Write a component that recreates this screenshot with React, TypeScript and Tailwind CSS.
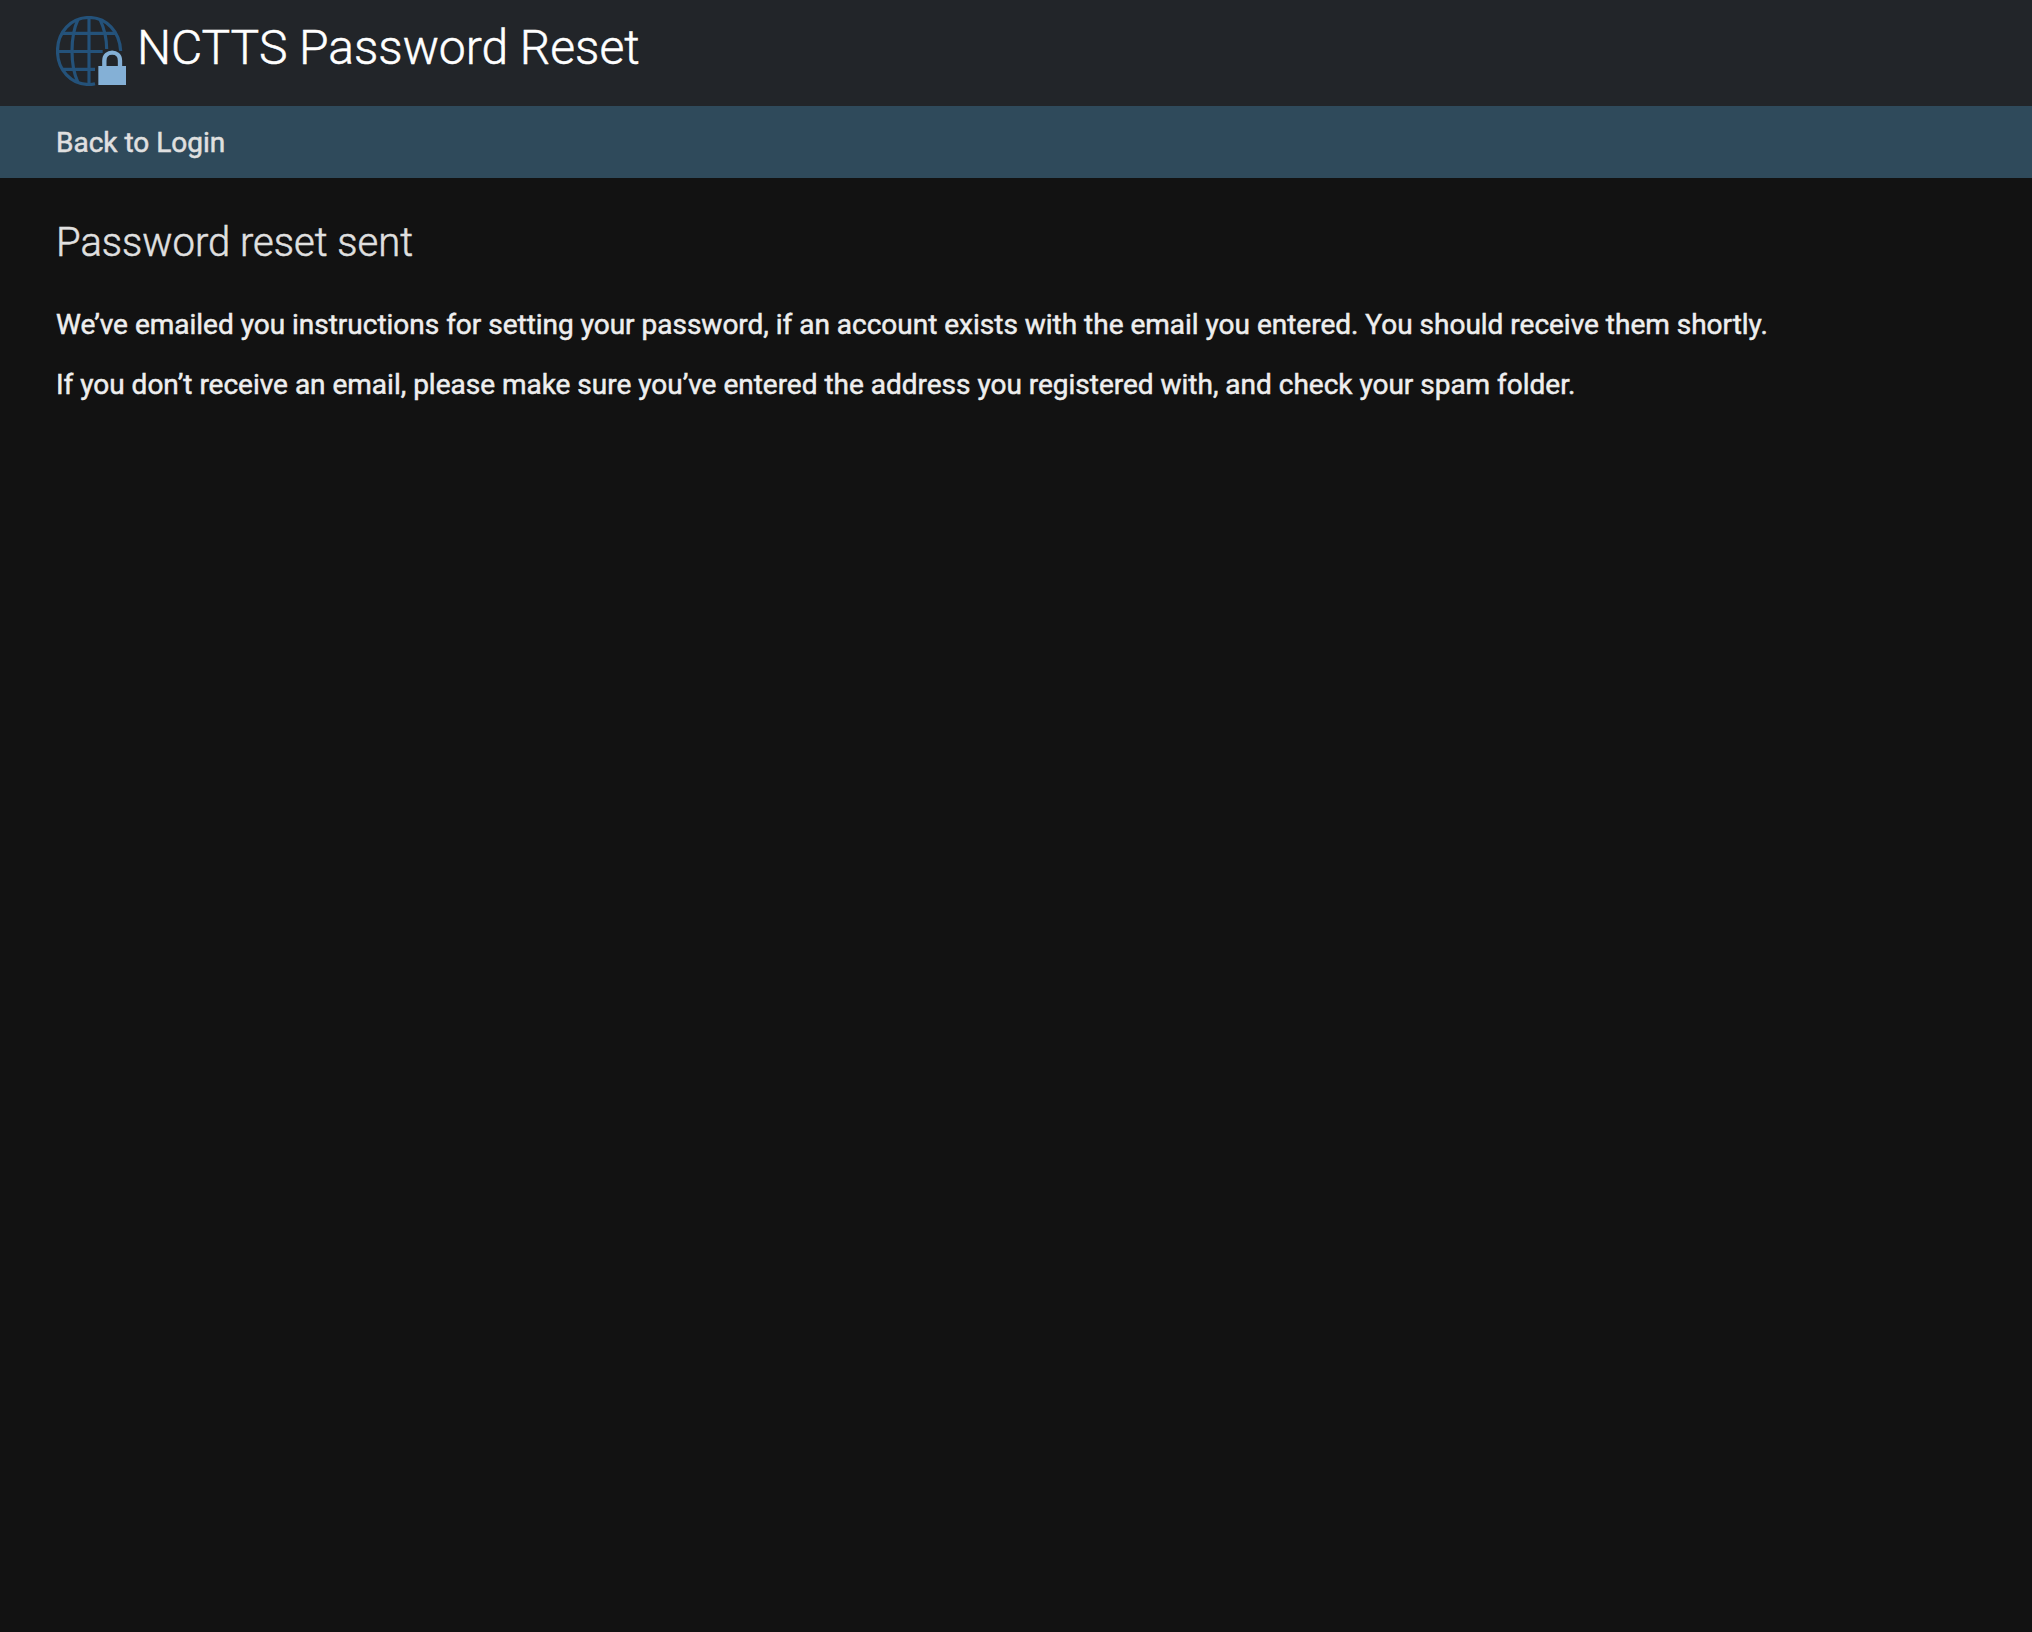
function GlobeLock() {
  return (
    <svg viewBox="48 48 210 210" className="h-[70px] w-[70px] shrink-0" fill="none" aria-hidden="true">
      <g stroke="#24527a" strokeWidth="9.5">
        <path d="M165 251.500C159 253 153 253.500 147 253.500C93 253.500 52.500 210 52.500 153C52.500 96 93 52.500 147 52.500C199 52.500 239 94 242 153" />
        <path d="M147 52V254" />
        <path d="M66 100H228M52 154.500H188M66 208H165" />
        <path d="M114 58C90 110 90 196 114 248" />
        <path d="M180 58C194 88 200 115 200 147" />
      </g>
      <path d="M193 202V182C193 150 240 150 240 182V202" stroke="#84b0d6" strokeWidth="13" />
      <path d="M175 198H258V255H175Z" fill="#84b0d6" />
    </svg>
  );
}

export default function App() {
  return (
    <div className="min-h-screen bg-[#121212] font-[Roboto,sans-serif] text-[28px] tracking-[-0.01px] text-[#eeeeee] [-webkit-text-stroke:0.5px_currentColor]">
      <header className="flex h-[106px] items-start bg-[#222529] px-14 pt-4">
        <GlobeLock />
        <h1 className="ml-[11px] text-[48px] leading-[64px] font-light text-white">NCTTS Password Reset</h1>
      </header>
      <nav className="flex h-[72px] items-center bg-[#2f4a5b] px-14 pt-px">
        <a href="#" className="leading-8 text-[#e0e0e0]">Back to Login</a>
      </nav>
      <main className="px-14 pt-[41px]">
        <h2 className="text-[40px] leading-[48px] font-light text-[#e0e0e0]">Password reset sent</h2>
        <p className="mt-[38px] leading-[40px]">
          We’ve emailed you instructions for setting your password, if an account exists with the email you entered. You should receive them shortly.
        </p>
        <p className="mt-5 leading-[40px]">
          If you don’t receive an email, please make sure you’ve entered the address you registered with, and check your spam folder.
        </p>
      </main>
    </div>
  );
}
